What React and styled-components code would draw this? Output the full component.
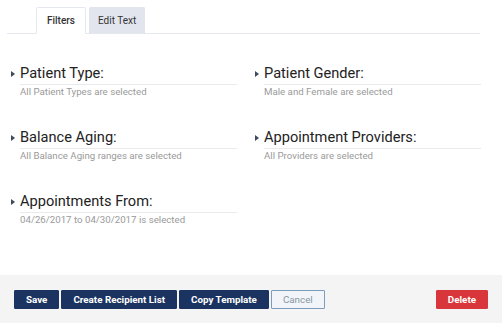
import React from 'react';
import styled, { createGlobalStyle } from 'styled-components';

const Global = createGlobalStyle`
  html, body { margin: 0; padding: 0; background: #fff; }
  body { font-family: Roboto, "Liberation Sans", Arial, sans-serif; }
`;

const Page = styled.div`
  display: flex;
  flex-direction: column;
  height: 323px;
  width: 502px;
`;

const TabBar = styled.div`
  display: flex;
  gap: 3px;
  margin: 7px 22px 0 7px;
  padding-left: 29px;
  border-bottom: 1px solid #e6e8ef;
  height: 26px;
`;

const Tab = styled.div`
  display: flex;
  align-items: center;
  justify-content: center;
  box-sizing: border-box;
  height: 27px;
  padding: 0 ${p => (p.$active ? '10px' : '8px')};
  font-size: 10px;
  font-weight: ${p => (p.$active ? 500 : 400)};
  color: #333;
  background: ${p => (p.$active ? '#fff' : '#e2e5ed')};
  border: 1px solid ${p => (p.$active ? '#e6e8ef' : '#e2e5ed')};
  border-bottom-color: ${p => (p.$active ? '#fff' : '#e6e8ef')};
  border-radius: 2px 2px 0 0;
`;

const Grid = styled.div`
  display: grid;
  grid-template-columns: 244px 244px;
  row-gap: 32px;
  padding: 31px 0 0 11px;
`;

const Section = styled.div`
  display: flex;
  flex-direction: column;
  padding-left: 9px;
  width: 217px;
`;

const Heading = styled.div`
  position: relative;
  font-size: 14.6px;
  line-height: 17px;
  color: #222;
  padding-bottom: 2px;
  border-bottom: 1px solid #e8eaee;
`;

const Arrow = styled.span`
  position: absolute;
  left: -9px;
  top: 6px;
  width: 0;
  height: 0;
  border-top: 3px solid transparent;
  border-bottom: 3px solid transparent;
  border-left: 4px solid #3b4b5c;
`;

const Sub = styled.div`
  font-size: 9.7px;
  line-height: 11px;
  margin-top: 1px;
  color: #9a9a9a;
`;

const Footer = styled.div`
  margin-top: auto;
  height: 48px;
  box-sizing: border-box;
  background: #f4f4f4;
  display: flex;
  align-items: center;
  padding: 0 14px;
  gap: 2px;
`;

const Button = styled.button`
  height: 19px;
  box-sizing: border-box;
  padding: 0 11px;
  font-family: Roboto, "Liberation Sans", Arial, sans-serif;
  font-size: 9.8px;
  border-radius: 1px;
  border: 1px solid ${p => (p.$kind === 'cancel' ? '#7d9cbd' : p.$kind === 'danger' ? '#d8363b' : '#1b3360')};
  background: ${p => (p.$kind === 'cancel' ? '#f1f5f9' : p.$kind === 'danger' ? '#d8363b' : '#1b3360')};
  color: ${p => (p.$kind === 'cancel' ? '#8a96a3' : '#fff')};
  font-weight: ${p => (p.$kind === 'cancel' ? 400 : 700)};
  cursor: pointer;
`;

const Spacer = styled.div`
  flex: 1;
`;

const filters = [
  ['Patient Type:', 'All Patient Types are selected'],
  ['Patient Gender:', 'Male and Female are selected'],
  ['Balance Aging:', 'All Balance Aging ranges are selected'],
  ['Appointment Providers:', 'All Providers are selected'],
  ['Appointments From:', '04/26/2017 to 04/30/2017 is selected'],
];

export default function App() {
  return (
    <Page>
      <Global />
      <TabBar>
        <Tab $active>Filters</Tab>
        <Tab>Edit Text</Tab>
      </TabBar>
      <Grid>
        {filters.map(([title, sub]) => (
          <Section key={title}>
            <Heading>
              <Arrow />
              {title}
            </Heading>
            <Sub>{sub}</Sub>
          </Section>
        ))}
      </Grid>
      <Footer>
        <Button>Save</Button>
        <Button>Create Recipient List</Button>
        <Button>Copy Template</Button>
        <Button $kind="cancel">Cancel</Button>
        <Spacer />
        <Button $kind="danger">Delete</Button>
      </Footer>
    </Page>
  );
}
